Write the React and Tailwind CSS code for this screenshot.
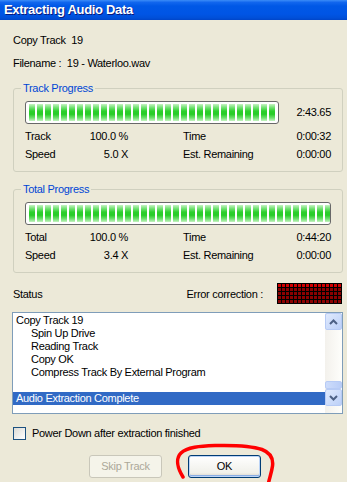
import React from "react";

const Seg = () => (
  <div className="w-[6px] h-full shrink-0 bg-[linear-gradient(to_bottom,#c6f3c2_0%,#6fe06f_22%,#2ccf2c_42%,#27cc27_60%,#6fe06f_82%,#c6f3c2_100%)]" />
);

function Bar({ count, className }) {
  return (
    <div className={className}>
      {Array.from({ length: count }).map((_, i) => (
        <Seg key={i} />
      ))}
    </div>
  );
}

function Row({ a, av, b, bv }) {
  return (
    <div className="flex h-[18px] items-center">
      <div className="w-[103px] flex justify-between">
        <span>{a}</span>
        <span>{av}</span>
      </div>
      <div className="ml-[55px] flex-1 flex justify-between">
        <span>{b}</span>
        <span>{bv}</span>
      </div>
    </div>
  );
}

function Group({ label, children, className }) {
  return (
    <div className={"relative border border-[#D0D0BF] rounded-[3px] pt-[12px] pl-[11px] pr-[11px] pb-[8px] " + className}>
      <span className="absolute left-[7px] -top-[7px] px-[2px] bg-[#ECE9D8] text-[#0046D5] leading-[13px]">
        {label}
      </span>
      {children}
    </div>
  );
}

export default function App() {
  const barCls =
    "h-[23px] border border-[#686868] rounded-[3px] bg-white px-[3px] py-[2px] flex gap-[2px] overflow-hidden";
  return (
    <div className="relative w-[347px] h-[482px] overflow-hidden bg-[#ECE9D8] text-black text-[11px] leading-[13px] tracking-[-0.3px] font-['Liberation_Sans',Arial,sans-serif]">
      {/* Title bar */}
      <div className="h-[20px] flex items-center pl-[4px] bg-[linear-gradient(to_bottom,#3b8cf7_0%,#1166ee_12%,#0058e6_30%,#0055e5_70%,#004fd8_90%,#0045c8_100%)]">
        <span className="text-white font-bold text-[13px] leading-[16px] tracking-[-0.3px] [text-shadow:1px_1px_0_#0a1a7a]">
          Extracting Audio Data
        </span>
      </div>

      <div className="pl-[13px] pr-[4px]">
        <div className="mt-[14px] whitespace-pre">Copy Track  19</div>
        <div className="mt-[10px] whitespace-pre">Filename :  19 - Waterloo.wav</div>

        <Group label="Track Progress" className="mt-[18px]">
          <div className="flex items-center">
            <Bar count={31} className={barCls + " w-[254px]"} />
            <span className="flex-1 text-right">2:43.65</span>
          </div>
          <div className="mt-[3px]">
            <Row a="Track" av="100.0 %" b="Time" bv="0:00:32" />
            <Row a="Speed" av="5.0 X" b="Est. Remaining" bv="0:00:00" />
          </div>
        </Group>

        <Group label="Total Progress" className="mt-[17px]">
          <Bar count={38} className={barCls + " w-[306px]"} />
          <div className="mt-[3px]">
            <Row a="Total" av="100.0 %" b="Time" bv="0:44:20" />
            <Row a="Speed" av="3.4 X" b="Est. Remaining" bv="0:00:00" />
          </div>
        </Group>

        <div className="mt-[10px] h-[21px] flex items-center pr-[1px]">
          <span className="pt-[2px]">Status</span>
          <span className="ml-auto pt-[2px] mr-[14px]">Error correction :</span>
          <div className="w-[65px] h-[21px] bg-black p-[1px] grid grid-cols-[repeat(16,3px)] grid-rows-[repeat(5,3px)] gap-[1px]">
            {Array.from({ length: 80 }).map((_, i) => (
              <div key={i} className={i < 16 ? "bg-[#d00000]" : "bg-[#8a0000]"} />
            ))}
          </div>
        </div>

        <div className="mt-[8px] -ml-[1px] w-[331px] h-[102px] border border-[#7F9DB9] bg-white flex">
          <div className="flex-1 pt-[1px]">
            <div className="h-[13px] pl-[3px]">Copy Track 19</div>
            <div className="h-[13px] pl-[18px]">Spin Up Drive</div>
            <div className="h-[13px] pl-[18px]">Reading Track</div>
            <div className="h-[13px] pl-[18px]">Copy OK</div>
            <div className="h-[13px] pl-[18px]">Compress Track By External Program</div>
            <div className="h-[13px]" />
            <div className="h-[13px] pl-[3px] bg-[#316AC5] text-white">Audio Extraction Complete</div>
          </div>
          <div className="w-[17px] flex flex-col bg-[linear-gradient(to_right,#f3f1ec,#fefefb)]">
            <div className="h-[17px] rounded-[2px] border border-[#B7CBF5] bg-[linear-gradient(to_bottom_right,#e0eafd,#bcd0f8)] flex items-center justify-center">
              <svg width="9" height="6" viewBox="0 0 9 6">
                <path d="M1 5 L4.5 1.5 L8 5" fill="none" stroke="#4D6185" strokeWidth="2" />
              </svg>
            </div>
            <div className="flex-1" />
            <div className="h-[8px] rounded-[2px] border border-[#B7CBF5] bg-[linear-gradient(to_right,#cddcfb,#b9cdf7)]" />
            <div className="h-[17px] rounded-[2px] border border-[#B7CBF5] bg-[linear-gradient(to_bottom_right,#e0eafd,#bcd0f8)] flex items-center justify-center">
              <svg width="9" height="6" viewBox="0 0 9 6">
                <path d="M1 1 L4.5 4.5 L8 1" fill="none" stroke="#4D6185" strokeWidth="2" />
              </svg>
            </div>
            <div className="h-[7px]" />
          </div>
        </div>

        <div className="mt-[13px] flex items-center">
          <div className="w-[13px] h-[13px] border border-[#1C5180] bg-[linear-gradient(to_bottom_right,#dcdbd5,#ffffff)]" />
          <span className="ml-[6px]">Power Down after extraction finished</span>
        </div>

        <div className="mt-[15px] flex">
          <div className="ml-[76px] w-[73px] h-[23px] rounded-[3px] border border-[#C9C7BA] bg-[#F5F4EA] text-[#ACA899] flex items-center justify-center">
            Skip Track
          </div>
          <div className="ml-[26px] w-[73px] h-[23px] rounded-[3px] border border-[#003C74] bg-[linear-gradient(to_bottom,#ffffff,#f0f0ea_80%,#d6d0c5)] shadow-[inset_0_0_0_1px_#bcd4f6,inset_0_-1px_0_1px_#89ade4] flex items-center justify-center">
            OK
          </div>
        </div>
      </div>

      <svg className="absolute left-0 top-0 pointer-events-none" width="347" height="482">
        <path
          d="M183 477 C178 469 175 459 181 453 C187 447 200 446 215 445.5 C235 445 252 446 262 449.5 C270 452.5 273.5 458 272.5 466 C271.5 473 269.5 478 268.5 483"
          fill="none"
          stroke="#FF0000"
          strokeWidth="3.5"
          strokeLinecap="round"
        />
      </svg>
    </div>
  );
}
